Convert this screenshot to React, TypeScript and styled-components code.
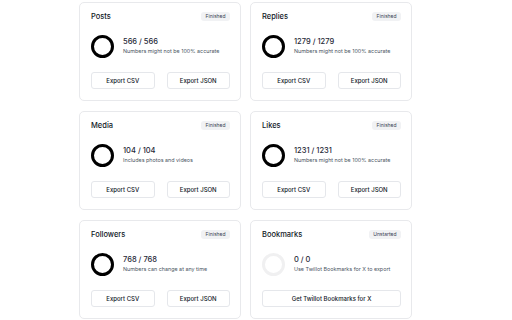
import styled, { createGlobalStyle } from "styled-components"

const Global = createGlobalStyle`
  html, body {
    margin: 0;
    padding: 0;
    background: #ffffff;
    font-family: "Inter", "Noto Sans", sans-serif;
  }
`

type Item = {
  title: string
  badge: string
  count: string
  note: string
  empty?: boolean
  single?: string
}

const items: Item[] = [
  { title: "Posts", badge: "Finished", count: "566 / 566", note: "Numbers might not be 100% accurate" },
  { title: "Replies", badge: "Finished", count: "1279 / 1279", note: "Numbers might not be 100% accurate" },
  { title: "Media", badge: "Finished", count: "104 / 104", note: "Includes photos and videos" },
  { title: "Likes", badge: "Finished", count: "1231 / 1231", note: "Numbers might not be 100% accurate" },
  { title: "Followers", badge: "Finished", count: "768 / 768", note: "Numbers can change at any time" },
  {
    title: "Bookmarks",
    badge: "Unstarted",
    count: "0 / 0",
    note: "Use Twillot Bookmarks for X to export",
    empty: true,
    single: "Get Twillot Bookmarks for X",
  },
]

export default function App() {
  return (
    <>
      <Global />
      <Page>
        <Grid>
          {items.map((it) => (
            <Card key={it.title}>
              <Head>
                <Title>{it.title}</Title>
                <Badge>{it.badge}</Badge>
              </Head>
              <Stats>
                <Ring $empty={it.empty} />
                <Info>
                  <Count>{it.count}</Count>
                  <Note>{it.note}</Note>
                </Info>
              </Stats>
              {it.single ? (
                <Buttons $single>
                  <Button>{it.single}</Button>
                </Buttons>
              ) : (
                <Buttons>
                  <Button>Export CSV</Button>
                  <Button>Export JSON</Button>
                </Buttons>
              )}
            </Card>
          ))}
        </Grid>
      </Page>
    </>
  )
}

const Page = styled.div`
  width: 512px;
  height: 320px;
  overflow: hidden;
  padding: 2px 0 0 79px;
  box-sizing: border-box;
`

const Grid = styled.div`
  display: grid;
  grid-template-columns: 162px 162px;
  grid-auto-rows: 99px;
  column-gap: 9px;
  row-gap: 10px;
`

const Card = styled.div`
  box-sizing: border-box;
  border: 1px solid #e8e9ec;
  border-radius: 5px;
  padding: 9px 10px 11px 11px;
  display: flex;
  flex-direction: column;
`

const Head = styled.div`
  display: flex;
  align-items: center;
  justify-content: space-between;
  height: 10px;
`

const Title = styled.div`
  font-size: 7.5px;
  font-weight: 500;
  color: #111827;
`

const Badge = styled.div`
  background: #f1f2f4;
  border-radius: 3px;
  padding: 0 4.5px;
  height: 9px;
  line-height: 9px;
  font-size: 5px;
  color: #374151;
`

const Stats = styled.div`
  display: flex;
  align-items: center;
  gap: 9px;
  margin-top: 14px;
  height: 23px;
`

const Ring = styled.div<{ $empty?: boolean }>`
  width: 23px;
  height: 23px;
  box-sizing: border-box;
  border-radius: 50%;
  border: 3px solid ${(p) => (p.$empty ? "#f0f0f1" : "#000000")};
  flex-shrink: 0;
`

const Info = styled.div`
  display: flex;
  flex-direction: column;
  gap: 2px;
  margin-top: -2px;
`

const Count = styled.div`
  font-size: 7.5px;
  font-weight: 500;
  color: #1f2937;
`

const Note = styled.div`
  font-size: 5.4px;
  color: #4b5563;
`

const Buttons = styled.div<{ $single?: boolean }>`
  display: grid;
  grid-template-columns: ${(p) => (p.$single ? "1fr" : "1fr 1fr")};
  gap: 12px;
  margin-top: 14px;
`

const Button = styled.div`
  height: 17px;
  box-sizing: border-box;
  border: 1px solid #e5e7eb;
  border-radius: 3px;
  display: flex;
  align-items: center;
  justify-content: center;
  font-size: 6px;
  font-weight: 500;
  color: #111827;
`
